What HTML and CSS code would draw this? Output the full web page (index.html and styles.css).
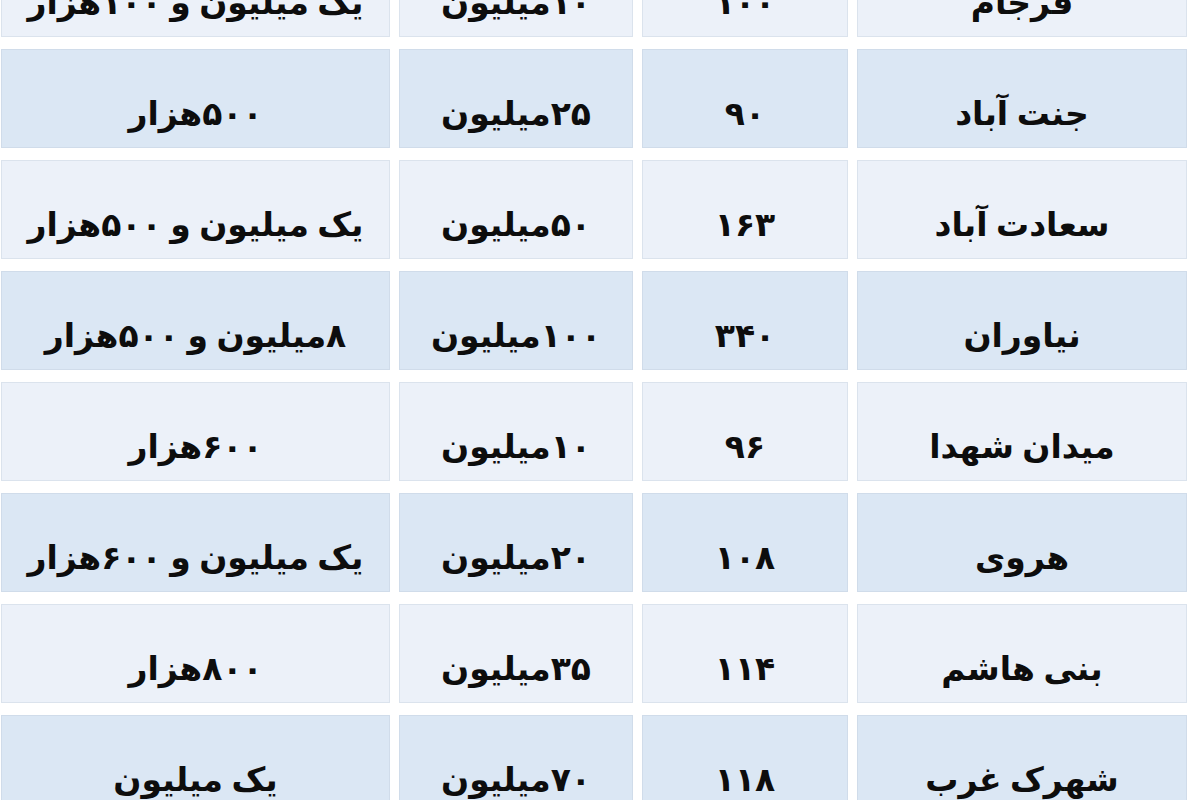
FILE: index.html
```html
<!DOCTYPE html>
<html lang="fa">
<head>
<meta charset="utf-8">
<link rel="stylesheet" href="styles.css">
</head>
<body>
<div class="table">
  <div class="cell light">فرجام</div><div class="cell light">۱۰۰</div><div class="cell light">۱۰میلیون</div><div class="cell light">یک میلیون و ۱۰۰هزار</div>
  <div class="cell blue">جنت آباد</div><div class="cell blue">۹۰</div><div class="cell blue">۲۵میلیون</div><div class="cell blue">۵۰۰هزار</div>
  <div class="cell light">سعادت آباد</div><div class="cell light">۱۶۳</div><div class="cell light">۵۰میلیون</div><div class="cell light">یک میلیون و ۵۰۰هزار</div>
  <div class="cell blue">نیاوران</div><div class="cell blue">۳۴۰</div><div class="cell blue">۱۰۰میلیون</div><div class="cell blue">۸میلیون و ۵۰۰هزار</div>
  <div class="cell light">میدان شهدا</div><div class="cell light">۹۶</div><div class="cell light">۱۰میلیون</div><div class="cell light">۶۰۰هزار</div>
  <div class="cell blue">هروی</div><div class="cell blue">۱۰۸</div><div class="cell blue">۲۰میلیون</div><div class="cell blue">یک میلیون و ۶۰۰هزار</div>
  <div class="cell light">بنی هاشم</div><div class="cell light">۱۱۴</div><div class="cell light">۳۵میلیون</div><div class="cell light">۸۰۰هزار</div>
  <div class="cell blue">شهرک غرب</div><div class="cell blue">۱۱۸</div><div class="cell blue">۷۰میلیون</div><div class="cell blue">یک میلیون</div>
</div>
</body>
</html>
```
FILE: styles.css
```css
html, body {
  margin: 0;
  padding: 0;
  background: #ffffff;
  overflow: hidden;
}

.table {
  direction: rtl;
  width: 1187px;
  margin-top: -62px;
  display: grid;
  grid-template-columns: 330px 206px 234px 389px;
  grid-auto-rows: 99px;
  column-gap: 9px;
  row-gap: 12px;
  font-family: "DejaVu Sans", sans-serif;
  font-weight: bold;
  font-size: 33px;
  word-spacing: -3px;
  color: #0d0d0d;
}

.cell {
  display: flex;
  align-items: center;
  justify-content: center;
  padding-top: 30px;
  box-sizing: border-box;
  white-space: nowrap;
  box-shadow: inset 0 0 0 1px rgba(190, 200, 215, 0.35);
}

.light {
  background: #ecf1f9;
}

.blue {
  background: #dbe7f4;
}
```
